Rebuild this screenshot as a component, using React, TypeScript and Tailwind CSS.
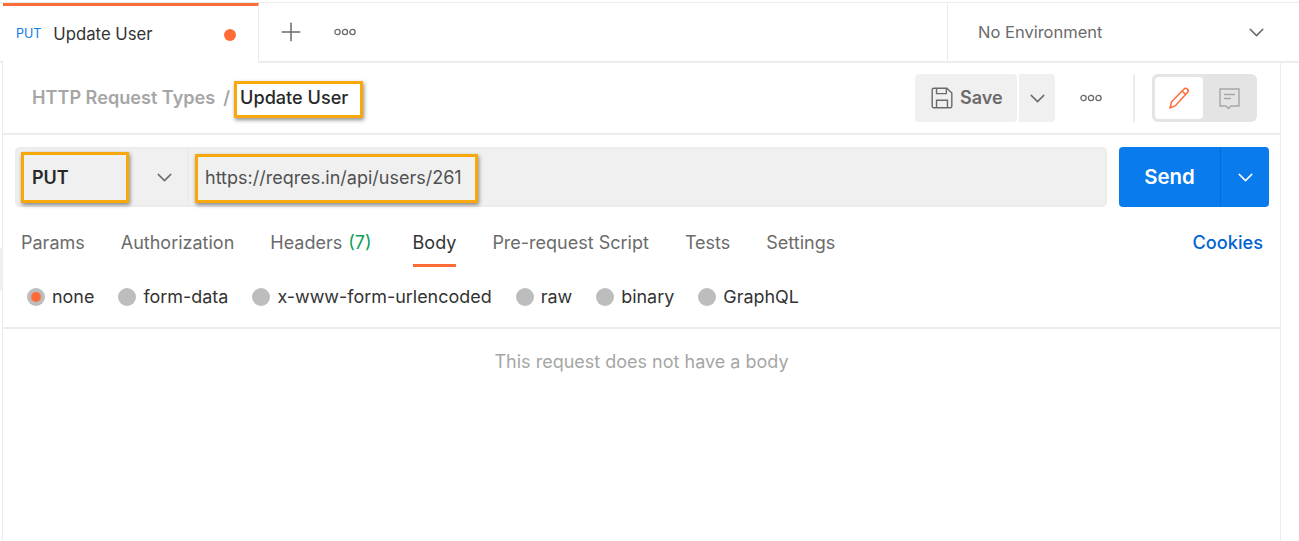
import { ChevronDown, Plus } from "lucide-react";

const tabs = ["Params", "Authorization", "Headers", "Body", "Pre-request Script", "Tests", "Settings"];
const bodyTypes = ["none", "form-data", "x-www-form-urlencoded", "raw", "binary", "GraphQL"];

function Dots() {
  return (
    <svg width="22" height="8" viewBox="0 0 22 8" fill="none" stroke="#6b6b6b" strokeWidth="1.3">
      <circle cx="3.5" cy="4" r="2.6" />
      <circle cx="11" cy="4" r="2.6" />
      <circle cx="18.5" cy="4" r="2.6" />
    </svg>
  );
}

// orange annotation box drawn over the screenshot
function Mark({ className }: { className: string }) {
  return (
    <span className={`absolute border-[3px] border-[#f9a80b] shadow-[1px_2px_4px_rgba(0,0,0,0.45)] ${className}`} />
  );
}

export default function App() {
  return (
    <div className="relative h-[541px] w-[1299px] overflow-hidden bg-white pt-[2px] font-['Inter',sans-serif] text-[#282828]">
      {/* sliver of the sidebar handle at the page edge */}
      <span className="absolute left-0 top-[248px] h-[43px] w-[2px] bg-[#f0f0f0]" />

      {/* tab strip */}
      <div className="flex h-[61px] border-t border-b-2 border-[#ececec] pl-[3px]">
        <div className="mb-[-2px] flex h-[60px] w-[256px] items-center border-t-[3px] border-r border-[#ff6c37] border-r-[#ececec] bg-white pl-[13px]">
          <span className="text-[12.5px] text-[#097bed]">PUT</span>
          <span className="ml-[12px] text-[16.7px] text-[#333]">Update User</span>
          <span className="ml-[71px] size-3 rounded-full bg-[#ff6c37]" />
        </div>
        <div className="flex items-center">
          <Plus className="ml-[17px] size-[30px] text-[#6b6b6b]" strokeWidth={1.2} />
          <span className="ml-[28px] flex"><Dots /></span>
        </div>
        <div className="ml-auto flex w-[352px] items-center border-l border-[#ececec] pl-[30px] pr-[30px]">
          <span className="text-[16.5px] text-[#6b6b6b]">No Environment</span>
          <ChevronDown className="ml-auto size-[25px] text-[#6b6b6b]" strokeWidth={1.4} />
        </div>
      </div>

      <div className="ml-[2px] h-[478px] w-[1279px] border-x border-[#ececec]">
        {/* breadcrumb and actions */}
        <div className="flex h-[72px] items-center border-b-2 border-[#ececec] pl-[29px] pr-[23px]">
          <span className="text-[18.1px] font-semibold text-[#a6a6a6]">HTTP Request Types</span>
          <span className="ml-[8px] text-lg font-semibold text-[#a6a6a6]">/</span>
          <span className="relative ml-[10px] text-[18.1px] font-medium text-[#282828]">
            Update User
            <Mark className="-left-[6px] -right-[15px] -top-[3px] -bottom-[6px]" />
          </span>
          <div className="ml-auto flex h-[48px] items-center">
            <div className="flex h-[48px] w-[102px] items-center rounded-[4px] bg-[#f0f0f0] pl-[15px]">
              <svg width="24" height="24" viewBox="0 0 22 22" fill="none" stroke="#6b6b6b" strokeWidth="1.3">
                <path d="M2 3.5A1.5 1.5 0 0 1 3.5 2h12L20 6.5v12a1.5 1.5 0 0 1-1.5 1.5h-15A1.5 1.5 0 0 1 2 18.5z" />
                <path d="M6 2v5h9V2M6 20v-7h10v7" />
              </svg>
              <span className="ml-[6px] text-lg font-semibold text-[#6b6b6b]">Save</span>
            </div>
            <div className="ml-[2px] flex h-[48px] w-[36px] items-center justify-center rounded-r-[4px] bg-[#f0f0f0]">
              <ChevronDown className="size-[25px] text-[#6b6b6b]" strokeWidth={1.4} />
            </div>
            <span className="ml-[25px] flex"><Dots /></span>
            <div className="ml-[31px] h-[48px] w-[2px] bg-[#ececec]" />
            <div className="ml-[17px] flex h-[48px] w-[105px] rounded-[6px] bg-[#e4e4e4] p-[3px]">
              <div className="flex w-[48px] items-center justify-center rounded-[4px] bg-white">
                <svg width="24" height="24" viewBox="0 0 24 24" fill="none" stroke="#ff6c37" strokeWidth="1.5" strokeLinejoin="round">
                  <path d="M3 22l1.6-6.2L16.8 3.2a2.4 2.4 0 0 1 3.6 3.4L8.6 19.6z" />
                  <path d="M15 5l4 3.8" />
                </svg>
              </div>
              <div className="flex flex-1 items-center justify-center">
                <svg width="24" height="24" viewBox="0 0 24 24" fill="none" stroke="#a6a6a6" strokeWidth="1.4">
                  <path d="M3 3h19v17h-8l-2.5 2.5L9 20H3z" />
                  <path d="M7 8.5h11M7 12.5h7" />
                </svg>
              </div>
            </div>
          </div>
        </div>

        {/* request line */}
        <div className="flex pl-[12px] pr-[11px] pt-[12px]">
          <div className="flex h-[60px] w-[1092px] rounded-[5px] border-2 border-[#ececec] bg-[#f0f0f0]">
            <div className="flex w-[172px] items-center border-r-2 border-[#ececec] pl-[15px] pr-[10px]">
              <span className="relative text-[18px] font-semibold text-[#282828]">
                PUT
                <Mark className="-left-[11px] -right-[60px] -top-[12px] -bottom-[12px]" />
              </span>
              <ChevronDown className="ml-auto size-[25px] text-[#6b6b6b]" strokeWidth={1.4} />
            </div>
            <div className="flex items-center pl-[16px]">
              <span className="relative text-[18px] text-[#505050]">
                https://reqres.in/api/users/261
                <Mark className="-left-[10px] -right-[16px] -top-[10px] -bottom-[12px]" />
              </span>
            </div>
          </div>
          <div className="ml-[12px] flex h-[60px] w-[150px] rounded-[4px] bg-[#097bed] text-white">
            <div className="flex w-[101px] items-center justify-center text-[20.4px] font-semibold">Send</div>
            <div className="flex flex-1 items-center justify-center border-l border-[#0a6ccf]">
              <ChevronDown className="size-[25px]" strokeWidth={1.4} />
            </div>
          </div>
        </div>

        {/* request tabs */}
        <div className="mt-[16px] flex h-[44px] items-start pl-[18px] pr-[17px]">
          <div className="flex gap-[36px]">
            {tabs.map((t) => (
              <div
                key={t}
                className={`h-[44px] pt-[6px] text-[18px] ${
                  t === "Body" ? "border-b-[3px] border-[#ff6c37] text-[#333]" : "text-[#6b6b6b]"
                }`}
              >
                {t}
                {t === "Headers" && <span className="ml-[6px] mr-[5px] text-[#0f9d58]">(7)</span>}
              </div>
            ))}
          </div>
          <span className="ml-auto pt-[6px] text-[18.2px] font-medium text-[#0265d2]">Cookies</span>
        </div>

        {/* body type radios */}
        <div className="flex h-[62px] items-center gap-[24px] border-b-2 border-[#ececec] pl-[24px]">
          {bodyTypes.map((b) => (
            <div key={b} className="flex items-center gap-[7px] text-[17.95px] text-[#333]">
              <span className="flex size-[18px] items-center justify-center rounded-full bg-[#bdbdbd]">
                {b === "none" && <span className="size-[10px] rounded-full bg-[#ff6c37]" />}
              </span>
              {b}
            </div>
          ))}
        </div>

        <div className="pt-[19px] text-center text-[18px] text-[#a6a6a6]">This request does not have a body</div>
      </div>
    </div>
  );
}
